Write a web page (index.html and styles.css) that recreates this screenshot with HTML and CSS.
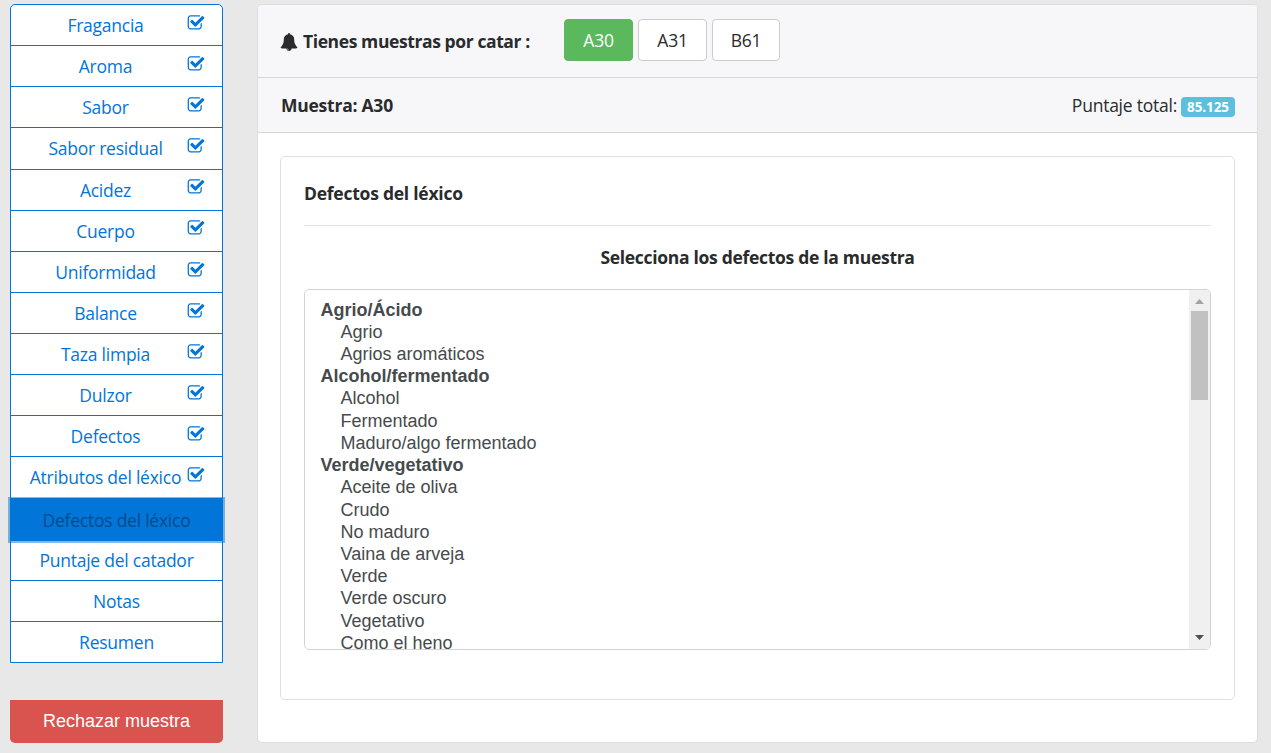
FILE: index.html
```html
<!DOCTYPE html>
<html lang="es">
<head>
<meta charset="utf-8">
<title>Catación</title>
<link rel="stylesheet" href="styles.css">
</head>
<body>
<svg class="defs" width="0" height="0" aria-hidden="true">
  <symbol id="check" viewBox="0 0 1792 1792"><path d="M1472 930v318q0 119-84.5 203.5t-203.5 84.5h-832q-119 0-203.5-84.5t-84.5-203.5v-832q0-119 84.5-203.5t203.5-84.5h832q63 0 117 25 15 7 18 23 3 17-9 29l-49 49q-10 10-23 10-3 0-9-2-23-6-45-6h-832q-66 0-113 47t-47 113v832q0 66 47 113t113 47h832q66 0 113-47t47-113v-254q0-13 9-22l64-64q10-10 23-10 6 0 12 3 20 8 20 29zm231-489l-814 814q-24 24-57 24t-57-24l-430-430q-24-24-24-57t24-57l110-110q24-24 57-24t57 24l263 263 647-647q24-24 57-24t57 24l110 110q24 24 24 57t-24 57z"/></symbol>
</svg>
<div class="layout">
  <aside class="sidebar">
    <nav class="menu">
      <a class="item"><span>Fragancia</span><svg class="check"><use href="#check"/></svg></a>
      <a class="item"><span>Aroma</span><svg class="check"><use href="#check"/></svg></a>
      <a class="item"><span>Sabor</span><svg class="check"><use href="#check"/></svg></a>
      <a class="item"><span>Sabor residual</span><svg class="check"><use href="#check"/></svg></a>
      <a class="item"><span>Acidez</span><svg class="check"><use href="#check"/></svg></a>
      <a class="item"><span>Cuerpo</span><svg class="check"><use href="#check"/></svg></a>
      <a class="item"><span>Uniformidad</span><svg class="check"><use href="#check"/></svg></a>
      <a class="item"><span>Balance</span><svg class="check"><use href="#check"/></svg></a>
      <a class="item"><span>Taza limpia</span><svg class="check"><use href="#check"/></svg></a>
      <a class="item"><span>Dulzor</span><svg class="check"><use href="#check"/></svg></a>
      <a class="item"><span>Defectos</span><svg class="check"><use href="#check"/></svg></a>
      <a class="item"><span>Atributos del léxico</span><svg class="check"><use href="#check"/></svg></a>
      <a class="item active"><span>Defectos del léxico</span></a>
      <a class="item"><span>Puntaje del catador</span></a>
      <a class="item"><span>Notas</span></a>
      <a class="item"><span>Resumen</span></a>
    </nav>
    <button class="reject">Rechazar muestra</button>
  </aside>
  <main class="card">
    <header class="samples">
      <svg class="bell" viewBox="0 0 1792 1792"><path d="M912 1696q0-16-16-16-59 0-101.5-42.5t-42.5-101.5q0-16-16-16t-16 16q0 73 51.5 124.5t124.5 51.5q16 0 16-16zm816-288q0 52-38 90t-90 38h-448q0 106-75 181t-181 75-181-75-75-181h-448q-52 0-90-38t-38-90q50-42 91-88t85-119.5 74.5-158.5 50-206 19.5-260q0-152 117-282.5t307-158.5q-8-19-8-39 0-40 28-68t68-28 68 28 28 68q0 20-8 39 190 28 307 158.5t117 282.5q0 139 19.5 260t50 206 74.5 158.5 85 119.5 91 88z"/></svg>
      <strong class="notice">Tienes muestras por catar :</strong>
      <div class="buttons">
        <button class="sample current">A30</button>
        <button class="sample">A31</button>
        <button class="sample">B61</button>
      </div>
    </header>
    <div class="summary">
      <strong>Muestra: A30</strong>
      <div class="score"><span>Puntaje total:</span><b class="badge">85.125</b></div>
    </div>
    <section class="panel">
      <h1 class="title">Defectos del léxico</h1>
      <h2 class="prompt"><span>Selecciona los defectos de la muestra</span></h2>
      <div class="listbox">
        <div class="options">
          <b>Agrio/Ácido</b>
          <span>Agrio</span>
          <span>Agrios aromáticos</span>
          <b>Alcohol/fermentado</b>
          <span>Alcohol</span>
          <span>Fermentado</span>
          <span>Maduro/algo fermentado</span>
          <b>Verde/vegetativo</b>
          <span>Aceite de oliva</span>
          <span>Crudo</span>
          <span>No maduro</span>
          <span>Vaina de arveja</span>
          <span>Verde</span>
          <span>Verde oscuro</span>
          <span>Vegetativo</span>
          <span>Como el heno</span>
        </div>
        <div class="scrollbar">
          <svg class="arrow up" viewBox="0 0 9 5"><path d="M0 5L4.5 0L9 5z"/></svg>
          <div class="thumb"></div>
          <svg class="arrow down" viewBox="0 0 9 5"><path d="M0 0H9L4.5 5z"/></svg>
        </div>
      </div>
    </section>
  </main>
</div>
</body>
</html>
```
FILE: styles.css
```css
* { box-sizing: border-box; }
body {
  margin: 0;
  height: 753px;
  overflow: hidden;
  background: #e8e8e8;
  color: #292b2c;
  font: 17.5px/22px "Open Sans", "Noto Sans", sans-serif;
  letter-spacing: -.24px;
}
button { font: inherit; letter-spacing: inherit; padding: 0; }
.defs { position: absolute; }
.layout { display: flex; gap: 34px; padding: 4px 0 0 10px; }

.sidebar { width: 213px; flex: none; }
.menu {
  display: flex;
  flex-direction: column;
  height: 659px;
  border: 1px solid #0275d8;
  border-radius: 5px 5px 0 0;
  background: #fff;
}
.item {
  display: flex;
  align-items: center;
  height: 41.125px;
  flex: none;
  padding: 0 17.5px;
  border-bottom: 1px solid #0275d8;
  color: #0275d8;
}
.item:last-child { border-bottom: 0; }
.item span { flex: 1; text-align: center; white-space: nowrap; }
.check {
  width: 18px;
  height: 18px;
  flex: none;
  margin: 0 0 4.6px 4px;
  fill: currentColor;
}
.active {
  height: 42px;
  margin: 0 -1px -.875px;
  padding-top: 1px;
  background: #0275d8;
  color: #014c8c;
  border-color: #0275d8;
  box-shadow: 0 0 0 2px rgba(2, 117, 216, .5);
  z-index: 1;
}
.reject {
  display: block;
  width: 213px;
  height: 43px;
  margin-top: 37px;
  border: 0;
  border-radius: 0 0 5px 5px;
  background: #d9534f;
  color: #fff;
  font: 18px "Liberation Sans", Arial, sans-serif;
  letter-spacing: 0;
}

.card {
  width: 1001px;
  height: 739px;
  flex: none;
  border: 1px solid #dcdddd;
  border-radius: 5px;
  background: #fff;
  overflow: hidden;
}
.samples, .summary {
  display: flex;
  align-items: center;
  background: #f7f7f9;
  border-bottom: 1px solid #d5d6d7;
  padding: 0 22px 0 23px;
}
.samples { height: 73px; }
.summary { height: 55px; justify-content: space-between; }
.bell { width: 18px; height: 18px; flex: none; margin: 1px 0 0 -1px; fill: #292b2c; }
.notice { width: 260px; margin-left: 5px; white-space: nowrap; }
.samples .notice { padding-bottom: 1px; letter-spacing: -.4px; }
.buttons { display: flex; gap: 5px; margin-left: 1px; padding-bottom: 3px; }
.sample {
  width: 69px;
  height: 42px;
  padding-top: 1px;
  border: 1px solid #ccc;
  border-radius: 4px;
  background: #fff;
  color: #292b2c;
}
.sample:last-child { width: 68px; }
.current { background: #5cb85c; border-color: #5cb85c; color: #fff; }
.score { display: flex; align-items: center; gap: 4px; }
.badge {
  width: 54px;
  height: 20px;
  margin-top: 3px;
  border-radius: 4px;
  background: #5bc0de;
  color: #fff;
  font-size: 13.5px;
  line-height: 20px;
  letter-spacing: -.1px;
  text-align: center;
}

.panel {
  height: 544px;
  margin: 23px 22px 0;
  padding: 0 23px;
  border: 1px solid #dfdfdf;
  border-radius: 5px;
}
.title, .prompt { margin: 0; font-size: 17.5px; line-height: 22px; letter-spacing: -.3px; }
.title { height: 69px; padding-top: 25px; border-bottom: 1px solid #e3e3e4; letter-spacing: -.24px; }
.prompt { height: 63px; padding-top: 20px; text-align: center; }
.listbox {
  display: flex;
  height: 361px;
  border: 1px solid #d3d4d5;
  border-radius: 5px;
  overflow: hidden;
}
.options {
  flex: 1;
  display: flex;
  flex-direction: column;
  padding: 8.6px 0 0 15.5px;
  color: #464a4c;
  font: 18px/22.22px "Liberation Sans", Arial, sans-serif;
  letter-spacing: 0;
}
.options > * { flex: none; height: 22.22px; }
.options span { padding-left: 20px; }
.scrollbar {
  display: flex;
  flex-direction: column;
  align-items: center;
  width: 21px;
  background: #f0f0f0;
}
.thumb { width: 17px; height: 89px; margin-top: 7px; background: #c1c1c1; }
.arrow { width: 9px; height: 5px; }
.up { margin-top: 9px; fill: #a3a3a3; }
.down { margin: auto 0 9px; fill: #505050; }
```
